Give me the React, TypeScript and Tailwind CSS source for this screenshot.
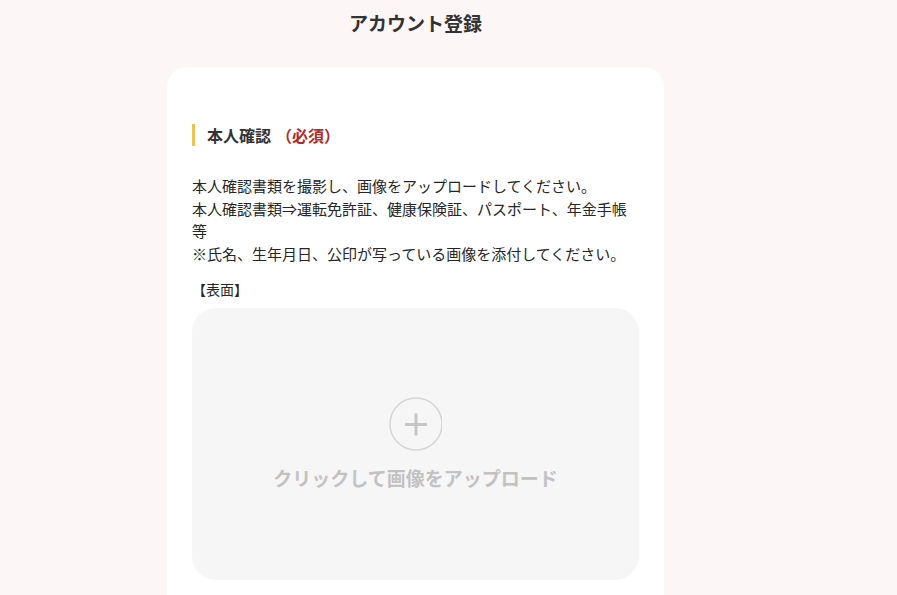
const jp = "font-['Noto_Sans_CJK_JP',_'Noto_Sans',_sans-serif]";

function PlusCircle() {
  return (
    <svg width="53" height="54" viewBox="0 0 53 54" className="block">
      <circle cx="27" cy="27" r="26" fill="none" stroke="#d6d6d6" strokeWidth="1.5" />
      <path d="M16 27.5 H38 M27 16.5 V38.5" stroke="#c6c6c6" strokeWidth="3" />
    </svg>
  );
}

export default function App() {
  return (
    <div className={`min-h-[595px] bg-[#fcf6f6] text-[#222] ${jp}`}>
      <div className="ml-[167px] flex w-[497px] flex-col">
        <h1 className="pt-[9px] pb-[30px] text-center font-bold text-[19px] leading-[28px] text-[#333]">
          アカウント登録
        </h1>

        <div className="rounded-t-[20px] bg-white px-[25px] pt-[57px] pb-10">
          <div className="flex h-[22px] items-center border-[#f2c24e] border-l-[3px] pl-[12px]">
            <span className="font-bold text-[16px] leading-none text-[#333]">本人確認</span>
            <span className="ml-[5px] font-bold text-[16px] leading-none text-[#b52a2a]">（必須）</span>
          </div>

          <p className="mt-[29px] text-[15px] leading-[22.5px] text-[#262626]">
            本人確認書類を撮影し、画像をアップロードしてください。
            <br />
            本人確認書類⇒運転免許証、健康保険証、パスポート、年金手帳等
            <br />
            ※氏名、生年月日、公印が写っている画像を添付してください。
          </p>

          <div className="mt-[14px] text-[14px] leading-[20px] text-[#262626]">【表面】</div>

          <div className="mt-[9px] flex h-[272px] flex-col items-center justify-center rounded-[24px] bg-[#f6f6f6] pb-[1px]">
            <PlusCircle />
            <div className="mt-[14px] font-bold text-[19px] leading-[26px] text-[#c2c2c2]">
              クリックして画像をアップロード
            </div>
          </div>
        </div>
      </div>
    </div>
  );
}
